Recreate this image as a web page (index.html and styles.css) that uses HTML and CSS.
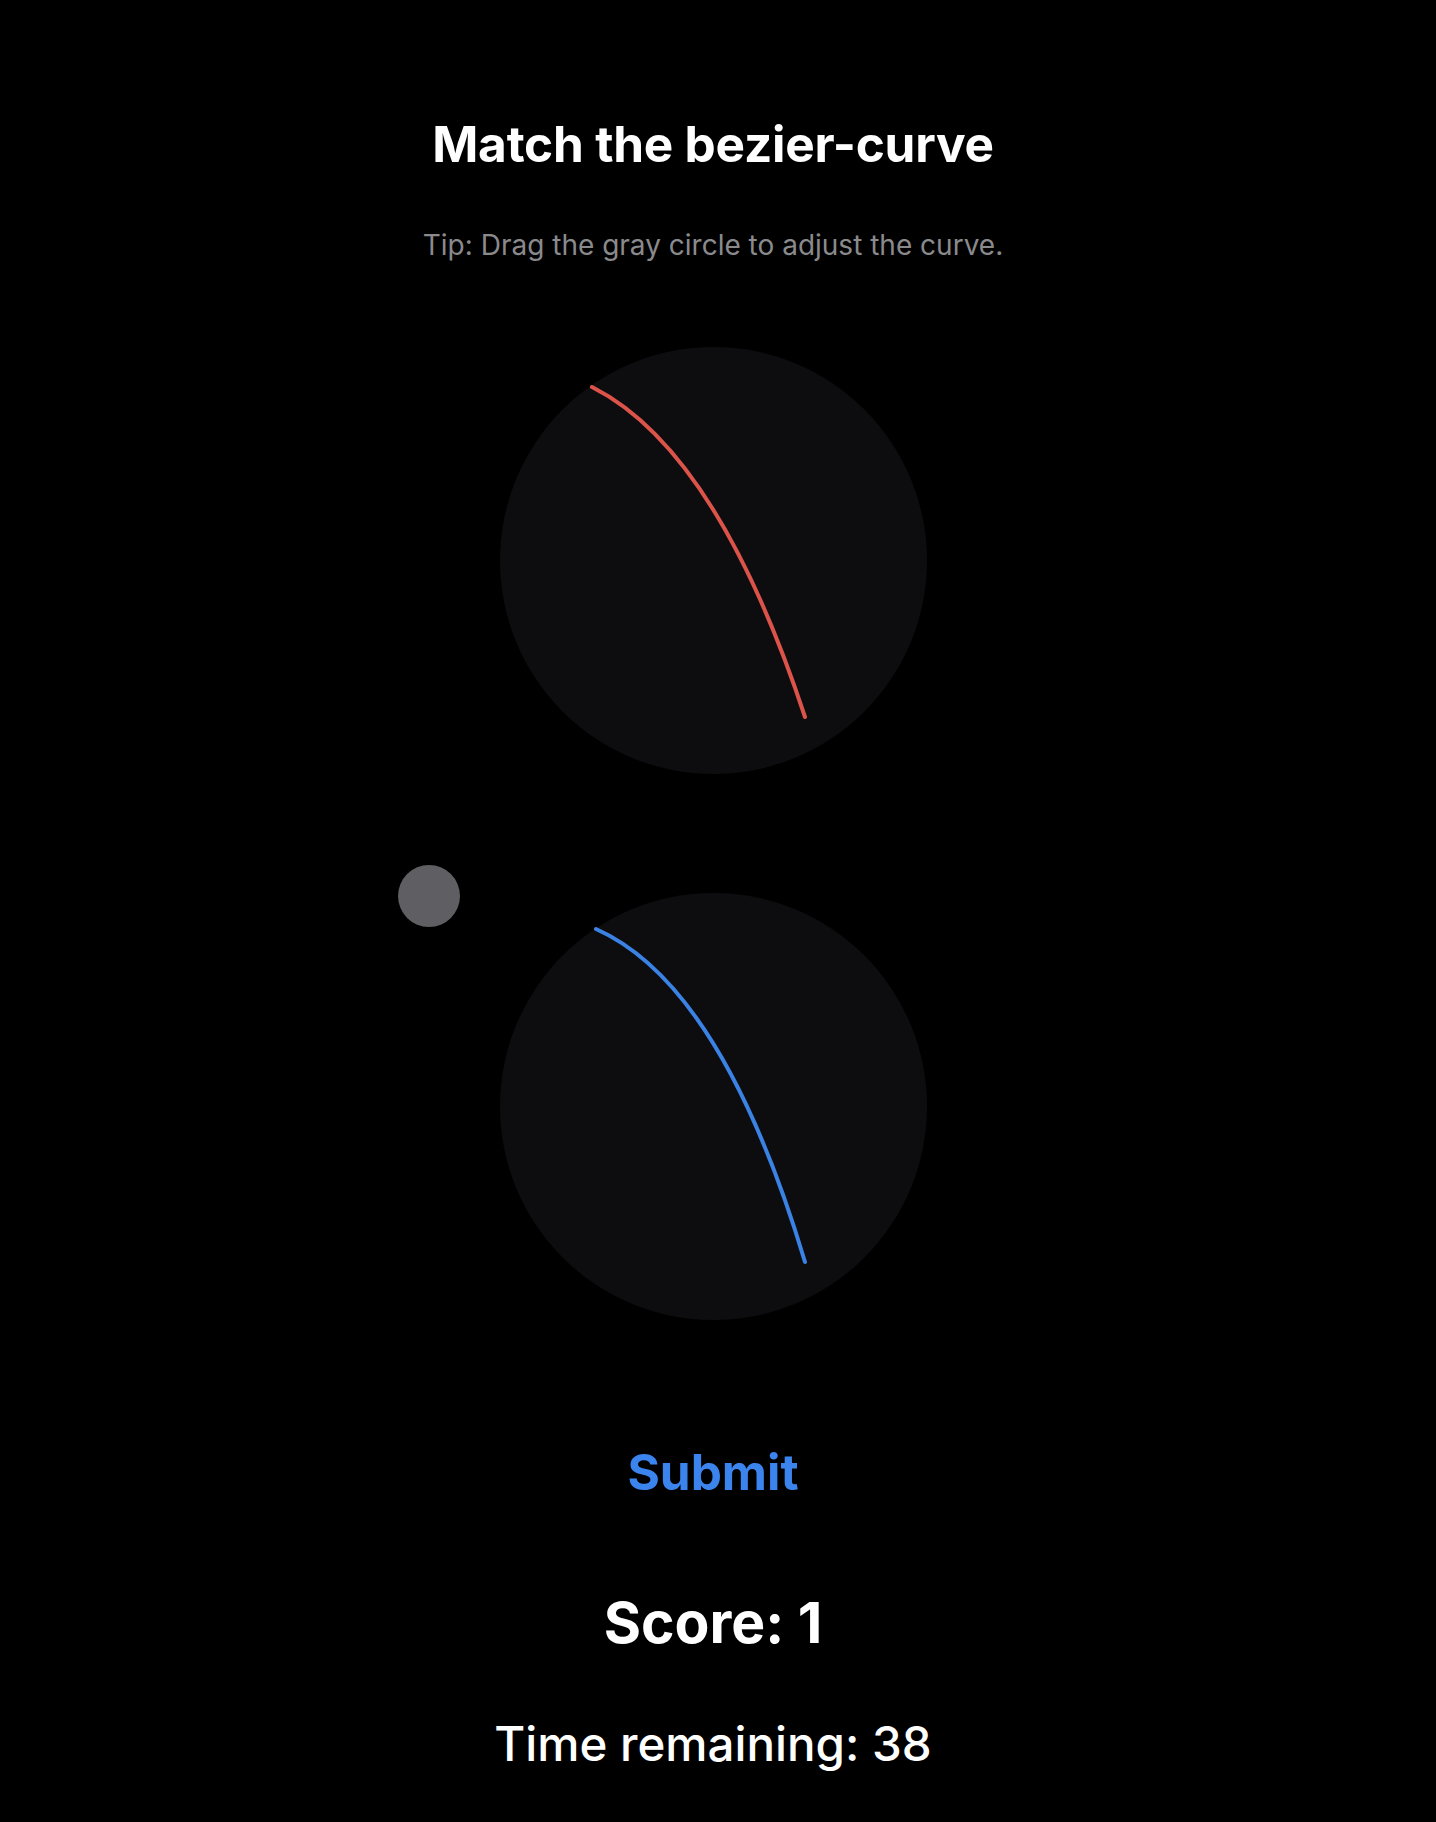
FILE: index.html
```html
<!DOCTYPE html>
<html lang="en">
<head>
<meta charset="utf-8">
<title>Match the bezier-curve</title>
<link rel="stylesheet" href="styles.css">
</head>
<body>
<main class="app">
  <h1 class="title">Match the bezier-curve</h1>
  <p class="tip">Tip: Drag the gray circle to adjust the curve.</p>
  <div class="stage">
    <div class="dial">
      <svg class="curve" viewBox="0 0 427 427" width="427" height="427">
        <path d="M92 40 Q217 103 305 370" fill="none" stroke="#dc5449" stroke-width="4" stroke-linecap="round"/>
      </svg>
    </div>
    <div class="dial dial-second">
      <svg class="curve" viewBox="0 0 427 427" width="427" height="427">
        <path d="M96 36 Q222 92 305 369" fill="none" stroke="#3a82e4" stroke-width="4" stroke-linecap="round"/>
      </svg>
    </div>
    <div class="handle"></div>
  </div>
  <button class="submit">Submit</button>
  <div class="score">Score: 1</div>
  <div class="time">Time remaining: 38</div>
</main>
</body>
</html>
```
FILE: styles.css
```css
html, body {
  margin: 0;
  padding: 0;
  background: #000;
}
body {
  font-family: Inter, "Liberation Sans", sans-serif;
  color: #fff;
}
.app {
  display: flex;
  flex-direction: column;
  align-items: center;
  padding: 114px 10px 0 0;
  min-height: 1822px;
  box-sizing: border-box;
}
.title {
  margin: 0;
  font-size: 49.5px;
  line-height: 60px;
  font-weight: 700;
  letter-spacing: -0.2px;
}
.tip {
  margin: 56px 0 0;
  font-size: 28px;
  line-height: 30px;
  color: #8a8a8d;
}
.stage {
  position: relative;
  margin-top: 87px;
  display: flex;
  flex-direction: column;
  gap: 119px;
}
.dial {
  width: 427px;
  height: 427px;
  border-radius: 50%;
  background: #0d0d10;
}
.curve {
  display: block;
}
.handle {
  position: absolute;
  left: -102px;
  top: 518px;
  width: 62px;
  height: 62px;
  border-radius: 50%;
  background: #5f5f63;
}
.submit {
  margin-top: 122px;
  background: none;
  border: 0;
  padding: 0;
  font-family: inherit;
  font-size: 49.5px;
  line-height: 60px;
  font-weight: 700;
  color: #3b84ee;
}
.score {
  margin-top: 86px;
  font-size: 57px;
  line-height: 70px;
  font-weight: 700;
}
.time {
  margin-top: 56px;
  font-size: 47.5px;
  line-height: 60px;
  font-weight: 500;
}
```
